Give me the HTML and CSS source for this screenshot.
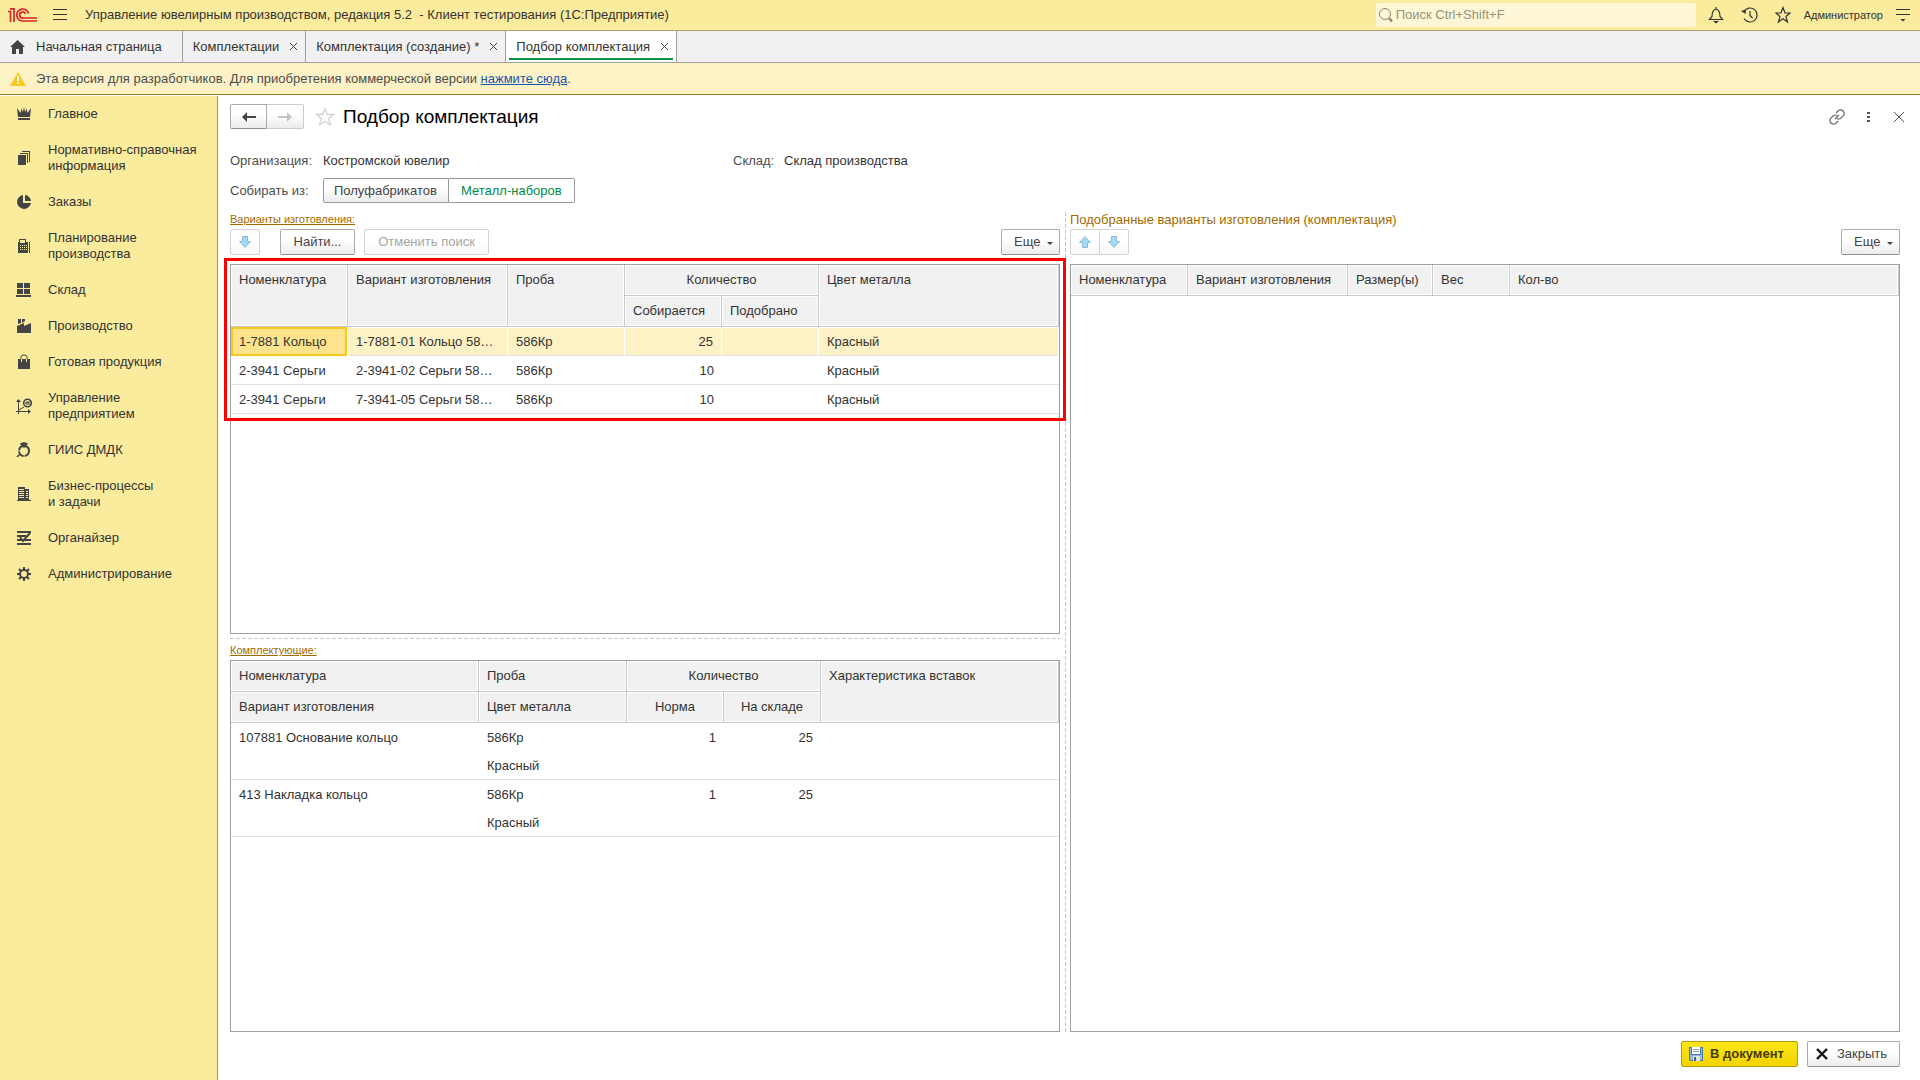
FILE: index.html
```html
<!DOCTYPE html>
<html lang="ru">
<head>
<meta charset="utf-8">
<title>Подбор комплектация</title>
<link rel="stylesheet" href="styles.css">
</head>
<body>
<header class="topbar">
  <svg class="logo" width="30" height="16" viewBox="0 0 30 16" fill="none" stroke="#d9232a" stroke-width="1.700"><path d="M0 4.500H2.500V15M2 1.800H6V15" /><path d="M20.500 6.500A6 6 0 1 0 15 14H29M17.500 7A3 3 0 1 0 15 11H29"/></svg>
  <button class="icon-btn" aria-label="Меню"><svg width="14" height="12" viewBox="0 0 14 12" stroke="#333"><path d="M0 .5H14M0 5.500H14M0 10.500H14"/></svg></button>
  <span class="app-title">Управление ювелирным производством, редакция 5.2 &nbsp;- Клиент тестирования (1С:Предприятие)</span>
  <label class="search">
    <svg width="16" height="16" viewBox="0 0 16 16" fill="none" stroke="#8f896c"><circle cx="7" cy="7" r="5.500"/><path d="M11 11L14 14.500" stroke-width="2.400"/></svg>
    <input type="text" placeholder="Поиск Ctrl+Shift+F" aria-label="Поиск">
  </label>
  <nav class="top-actions">
    <button class="icon-btn" aria-label="Оповещения"><svg width="16" height="18" viewBox="0 0 16 18" fill="none" stroke="#333" stroke-width="1.200"><path d="M1.500 13.500H14.500L12 10.500Q12 4 8 3Q4 4 4 10.500ZM8 1V3"/><path d="M5 15H11L8 17.500Z" fill="#333" stroke="none"/></svg></button>
    <button class="icon-btn" aria-label="История"><svg width="17" height="18" viewBox="0 0 17 18" fill="none" stroke="#333" stroke-width="1.200"><path d="M3 5.500A7 7 0 1 1 3 12.500M9 5V9.500L11.500 12"/><path d="M0 5L5 3.500L4.500 8Z" fill="#333" stroke="none"/></svg></button>
    <button class="icon-btn" aria-label="Избранное"><svg width="16" height="18" viewBox="0 0 16 18" fill="none" stroke="#333" stroke-width="1.200"><path d="M8 1.500L10 7H15L11 10.500L12.500 16L8 12.800L3.500 16L5 10.500L1 7H6Z"/></svg></button>
    <a class="user" href="#">Администратор</a>
    <button class="icon-btn" aria-label="Сервис"><svg width="14" height="14" viewBox="0 0 14 14" stroke="#333"><path d="M0 1.500H14M0 6.500H14"/><path d="M4.500 11H9.500L7 13.500Z" fill="#333" stroke="none"/></svg></button>
  </nav>
</header>

<nav class="tabs">
  <a class="tab tab-home" href="#"><svg width="15" height="14" viewBox="0 0 15 14" fill="#444"><path d="M7.500 0L15 7H13V14H9V9H6V14H2V7H0Z"/></svg>Начальная страница</a>
  <a class="tab" href="#">Комплектации<svg width="9" height="9" viewBox="0 0 9 9" stroke="#444"><path d="M1 1L8 8M8 1L1 8"/></svg></a>
  <a class="tab" href="#">Комплектация (создание) *<svg width="9" height="9" viewBox="0 0 9 9" stroke="#444"><path d="M1 1L8 8M8 1L1 8"/></svg></a>
  <a class="tab active" href="#">Подбор комплектация<svg width="9" height="9" viewBox="0 0 9 9" stroke="#444"><path d="M1 1L8 8M8 1L1 8"/></svg></a>
</nav>

<div class="notice">
  <svg width="16" height="14" viewBox="0 0 16 14"><path d="M8 0L16 14H0Z" fill="#f9c81e"/><path d="M7 4H9V9H7ZM7 10.500H9V12H7Z" fill="#fff"/></svg>
  <span>Эта версия для разработчиков. Для приобретения коммерческой версии <a href="#">нажмите сюда</a>.</span>
</div>

<div class="workspace">
<nav class="sidebar">
  <a href="#"><svg viewBox="0 0 16 16"><path d="M1 2L4.500 7L5.500 2.500L7 6L8 1L9 6L10.500 2.500L11.500 7L15 2L14 11H2ZM2 12H14V14H2Z"/></svg>Главное</a>
  <a href="#"><svg viewBox="0 0 16 16"><path d="M2 5H10V15H2ZM4 3H12V13H11V4H4ZM6 1H14V12H13V2H6Z"/></svg>Нормативно-справочная информация</a>
  <a href="#"><svg viewBox="0 0 16 16"><path d="M7 1V9H15A7 7 0 1 1 7 1ZM9 1A6.500 6.500 0 0 1 15 7H9Z"/></svg>Заказы</a>
  <a href="#"><svg viewBox="0 0 16 16"><path fill-rule="evenodd" d="M3 1H10V4H12V15H2V4H3ZM4 2V5H9V2ZM4 7V8H5V7ZM6 7V8H7V7ZM8 7V8H9V7ZM10 7V8H11V7ZM4 9V10H5V9ZM6 9V10H7V9ZM8 9V10H9V9ZM10 9V10H11V9ZM4 11V12H5V11ZM6 11V12H7V11ZM8 11V12H9V11ZM10 11V12H11V11ZM13 4H14V15H13Z"/></svg>Планирование производства</a>
  <a href="#"><svg viewBox="0 0 16 16"><path d="M1 1H7V6H1ZM8 1H14V6H8ZM1 7H7V12H1ZM8 7H14V12H8ZM0 13H15V15H0Z"/></svg>Склад</a>
  <a href="#"><svg viewBox="0 0 16 16"><path d="M2 1H5V5L2 6ZM6 1H9V3L6 5ZM1 8L8 5V8L15 5V15H1Z"/></svg>Производство</a>
  <a href="#"><svg viewBox="0 0 16 16"><path d="M2 5H14V15H2Z"/><path d="M5 7V3Q5 1 8 1Q11 1 11 3V7" fill="none" stroke="#444"/><path d="M5.500 5V8M10.500 5V8" stroke="#faeb9d"/></svg>Готовая продукция</a>
  <a href="#"><svg viewBox="0 0 16 16"><path d="M2.500 16V3M0 13.500H14M3 12L8 9" fill="none" stroke="#444"/><path d="M0 4L2.500 1L5 4ZM12 11L15 13.500L12 16Z"/><circle cx="11.500" cy="5" r="3.800" fill="none" stroke="#444" stroke-width="1.600"/><path d="M11 3V7M13 3V7M9 5H13" stroke="#444"/></svg>Управление предприятием</a>
  <a href="#"><svg viewBox="0 0 16 16"><circle cx="8" cy="9" r="5" fill="none" stroke="#444" stroke-width="2" stroke-dasharray="7 1"/><path d="M5 2L7 1H9L11 2L8 5ZM4 12L1 15" stroke="#444" stroke-width="1.500"/></svg>ГИИС ДМДК</a>
  <a href="#"><svg viewBox="0 0 16 16"><path fill-rule="evenodd" d="M2 1H9V3H13V14H15V15H1V14H2ZM3 3V4H8V3ZM3 5V6H8V5ZM3 7V8H8V7ZM3 9V10H8V9ZM3 11V12H8V11ZM10 5V6H12V5ZM10 7V8H12V7ZM10 9V10H12V9ZM10 11V12H12V11Z"/></svg>Бизнес-процессы<br>и задачи</a>
  <a href="#"><svg viewBox="0 0 16 16"><path d="M1 1H15V3H1ZM1 5H10V7H1ZM1 9H15V11H1ZM1 13H15V15H1Z"/><path d="M4 7L7 11L14 3" fill="none" stroke="#444" stroke-width="2"/></svg>Органайзер</a>
  <a href="#"><svg viewBox="0 0 16 16"><circle cx="8" cy="8" r="4" fill="none" stroke="#444" stroke-width="2"/><path d="M8 1V4M8 12V15M1 8H4M12 8H15M3 3L5 5M11 11L13 13M13 3L11 5M5 11L3 13" stroke="#444" stroke-width="2"/></svg>Администрирование</a>
</nav>

<main class="form">
  <div class="title-row">
    <div class="group history">
      <button class="btn" aria-label="Назад"><svg width="14" height="10" viewBox="0 0 14 10" fill="#444"><path d="M0 5L5 0V4H14V6H5V10Z"/></svg></button>
      <button class="btn off" aria-label="Вперед"><svg width="14" height="10" viewBox="0 0 14 10" fill="#c4c4c4"><path d="M14 5L9 0V4H0V6H9V10Z"/></svg></button>
    </div>
    <button class="icon-btn fav" aria-label="В избранное"><svg width="20" height="20" viewBox="0 0 20 20" fill="none" stroke="#d4d4d4" stroke-width="1.300"><path d="M10 1.500L12.300 7.500H18.500L13.500 11.500L15.500 18L10 14.200L4.500 18L6.500 11.500L1.500 7.500H7.700Z"/></svg></button>
    <h1>Подбор комплектация</h1>
    <div class="window-actions">
      <button class="icon-btn" aria-label="Ссылка"><svg width="16" height="16" viewBox="0 0 16 16" fill="none" stroke="#666" stroke-width="1.200"><path d="M7 4L9.500 1.500Q12 0 14 2Q16 4 14.500 6.500L11.500 9.500Q9.500 10.500 8 9.500M9 12L6.500 14.500Q4 16 2 14Q0 12 1.500 9.500L4.500 6.500Q6.500 5.500 8 6.500M6 10L10 6"/></svg></button>
      <button class="icon-btn" aria-label="Еще"><svg width="16" height="16" viewBox="0 0 16 16" fill="#555"><path d="M7 3H10V5H7ZM7 7H10V9H7ZM7 11H10V13H7Z"/></svg></button>
      <button class="icon-btn" aria-label="Закрыть окно"><svg width="16" height="16" viewBox="0 0 16 16" fill="none" stroke="#555"><path d="M3 3L13 13M13 3L3 13"/></svg></button>
    </div>
  </div>

  <dl class="info">
    <div><dt>Организация:</dt><dd>Костромской ювелир</dd></div>
    <div><dt>Склад:</dt><dd>Склад производства</dd></div>
  </dl>

  <div class="source">
    <span class="caption">Собирать из:</span>
    <div class="group switch">
      <button class="btn">Полуфабрикатов</button>
      <button class="btn chosen">Металл-наборов</button>
    </div>
  </div>

  <div class="panes">
    <div class="left">
      <section class="pane">
        <a class="pane-link" href="#">Варианты изготовления:</a>
        <div class="toolbar">
          <button class="btn light arrow" aria-label="Добавить"><svg width="12" height="12" viewBox="0 0 12 12" fill="#a5d8f3" stroke="#8fb9d3"><path d="M3.500 .5H8.500V5.500H11.500L6 11.500L.5 5.500H3.500Z"/></svg></button>
          <button class="btn find">Найти...</button>
          <button class="btn light cancel">Отменить поиск</button>
          <button class="btn more">Еще<span class="caret"></span></button>
        </div>
        <div class="grid-box">
          <table>
            <colgroup><col class="w117"><col class="w160"><col class="w117"><col class="w97"><col class="w97"><col></colgroup>
            <thead>
              <tr><th rowspan="2">Номенклатура</th><th rowspan="2">Вариант изготовления</th><th rowspan="2">Проба</th><th colspan="2" class="mid">Количество</th><th rowspan="2">Цвет металла</th></tr>
              <tr><th>Собирается</th><th>Подобрано</th></tr>
            </thead>
            <tbody>
              <tr class="selected"><td class="current">1-7881 Кольцо</td><td>1-7881-01 Кольцо 58…</td><td>586Кр</td><td class="num">25</td><td></td><td>Красный</td></tr>
              <tr><td>2-3941 Серьги</td><td>2-3941-02 Серьги 58…</td><td>586Кр</td><td class="num">10</td><td></td><td>Красный</td></tr>
              <tr><td>2-3941 Серьги</td><td>7-3941-05 Серьги 58…</td><td>586Кр</td><td class="num">10</td><td></td><td>Красный</td></tr>
            </tbody>
          </table>
          <div class="highlight"></div>
        </div>
      </section>
      <section class="pane parts">
        <a class="pane-link" href="#">Комплектующие:</a>
        <div class="grid-box">
          <table>
            <colgroup><col class="w248"><col class="w148"><col class="w97"><col class="w97"><col></colgroup>
            <thead>
              <tr><th>Номенклатура</th><th>Проба</th><th colspan="2" class="mid">Количество</th><th rowspan="2">Характеристика вставок</th></tr>
              <tr><th>Вариант изготовления</th><th>Цвет металла</th><th class="mid">Норма</th><th class="mid">На складе</th></tr>
            </thead>
            <tbody class="double">
              <tr><td>107881 Основание кольцо</td><td>586Кр<br>Красный</td><td class="num">1</td><td class="num">25</td><td></td></tr>
              <tr><td>413 Накладка кольцо</td><td>586Кр<br>Красный</td><td class="num">1</td><td class="num">25</td><td></td></tr>
            </tbody>
          </table>
        </div>
      </section>
    </div>
    <section class="pane right">
      <h2>Подобранные варианты изготовления (комплектация)</h2>
      <div class="toolbar">
        <div class="group">
          <button class="btn light arrow" aria-label="Убрать"><svg width="12" height="12" viewBox="0 0 12 12" fill="#a5d8f3" stroke="#8fb9d3"><path d="M3.500 11.500H8.500V6.500H11.500L6 .5L.5 6.500H3.500Z"/></svg></button>
          <button class="btn light arrow" aria-label="Перенести"><svg width="12" height="12" viewBox="0 0 12 12" fill="#a5d8f3" stroke="#8fb9d3"><path d="M3.500 .5H8.500V5.500H11.500L6 11.500L.5 5.500H3.500Z"/></svg></button>
        </div>
        <button class="btn more">Еще<span class="caret"></span></button>
      </div>
      <div class="grid-box">
        <table>
          <colgroup><col class="w117"><col class="w160"><col class="w85"><col class="w77"><col></colgroup>
          <thead><tr><th>Номенклатура</th><th>Вариант изготовления</th><th>Размер(ы)</th><th>Вес</th><th>Кол-во</th></tr></thead>
        </table>
      </div>
    </section>
  </div>

  <footer class="actions">
    <button class="btn primary"><svg width="14" height="14" viewBox="0 0 14 14"><path d="M0 0H14V14H1L0 13Z" fill="#4a78a8"/><path d="M1 1H2V8H12V1H13V13H1Z" fill="#8fb8dc"/><path d="M3 0H11V7H3Z" fill="#fff"/><path d="M4 2H10V3H4ZM4 4H10V5H4Z" fill="#8a9aab"/><path d="M4 9H11V14H4Z" fill="#dfe3e8"/><path d="M5 10H7V14H5Z" fill="#3d5e85"/></svg>В документ</button>
    <button class="btn"><svg width="12" height="12" viewBox="0 0 12 12" stroke="#111" stroke-width="2.400"><path d="M1 1L11 11M11 1L1 11"/></svg>Закрыть</button>
  </footer>
</main>
</div>
</body>
</html>
```
FILE: styles.css
```css
* { box-sizing: border-box; }

body {
  margin: 0;
  min-height: 100vh;
  display: flex;
  flex-direction: column;
  font: 13px/16px "Liberation Sans", Arial, sans-serif;
  color: #333;
  background: #fff;
}

button, input { font: inherit; color: inherit; }
a { color: inherit; text-decoration: none; }
svg { flex: none; display: block; }

.icon-btn {
  display: flex;
  align-items: center;
  justify-content: center;
  padding: 0;
  border: 0;
  background: none;
}

/* Top bar */
.topbar {
  display: flex;
  align-items: center;
  height: 31px;
  padding: 0 10px 0 8px;
  background: #faeb9d;
  border-bottom: 1px solid #a8a06e;
}
.logo { margin-right: 15px; }
.app-title { margin-left: 18px; flex: 1; }
.search {
  display: flex;
  align-items: center;
  width: 320px;
  height: 24px;
  padding-left: 2px;
  gap: 2px;
  background: #fdf7d8;
  border-radius: 2px;
}
.search input {
  flex: 1;
  padding: 0;
  border: 0;
  outline: 0;
  background: none;
}
.search input::placeholder { color: #99937a; opacity: 1; }
.top-actions {
  display: flex;
  align-items: center;
  gap: 17px;
  margin-left: 12px;
}
.user { margin: 0 -4px; font-size: 11px; }

/* Open windows */
.tabs {
  display: flex;
  height: 32px;
  background: #f1f1f1;
  border-bottom: 1px solid #a0a0a0;
}
.tab {
  display: flex;
  align-items: center;
  gap: 10px;
  padding: 0 7px 0 10px;
  border-right: 1px solid #a0a0a0;
}
.tab-home { gap: 11px; padding-right: 20px; }
.tab.active {
  background: linear-gradient(#009646, #009646) 50% 27px / calc(100% - 6px) 2px no-repeat #fff;
}

.notice {
  display: flex;
  align-items: center;
  gap: 10px;
  height: 32px;
  padding-left: 10px;
  color: #4d4d4d;
  background: #fdf2c5;
  border-bottom: 1px solid #947a1c;
}
.notice a { color: #1c55ae; text-decoration: underline; }

/* Sections */
.workspace { flex: 1; display: flex; padding-top: 1px; }
.sidebar {
  width: 218px;
  background: #faeb9d;
  border-right: 1px solid #9b9257;
}
.sidebar a {
  display: grid;
  grid-template-columns: 16px 1fr;
  align-items: center;
  column-gap: 16px;
  padding: 10px 12px 10px 16px;
}
.sidebar svg { width: 16px; height: 16px; fill: #444; grid-row: 1 / span 2; }
.sidebar a { display: flex; white-space: normal; }

/* Form */
.form {
  flex: 1;
  min-width: 0;
  display: flex;
  flex-direction: column;
  padding: 8px 20px 13px 12px;
}
.title-row { display: flex; align-items: center; height: 25px; }
.history .btn { width: 37px; height: 25px; padding: 0; }
.fav { margin: 0 8px 0 11px; }
h1 { margin: 0; font: 19px/24px "Liberation Sans", Arial, sans-serif; color: #000; }
.window-actions { display: flex; gap: 15px; margin: 0 -7px 0 auto; }

.info { display: flex; margin: 24px 0 0; }
.info div { display: flex; }
.info div:first-child { width: 503px; }
.info dt { color: #4d4d4d; }
.info div:first-child dt { width: 93px; }
.info div + div dt { width: 51px; }
.info dd { margin: 0; }

.source { display: flex; align-items: center; margin-top: 9px; }
.caption { width: 93px; color: #4d4d4d; }

.btn {
  display: flex;
  align-items: center;
  justify-content: center;
  height: 26px;
  padding: 0 12px;
  color: #444;
  background: linear-gradient(#fff 40%, #ececec);
  border: 1px solid #ababab;
  border-bottom-color: #8f8f8f;
  border-radius: 2px;
  white-space: nowrap;
}
.btn.off { border-color: #ccc; }
.btn.light { color: #a6a6a6; background: linear-gradient(#fff 40%, #f7f7f7); border-color: #d2d2d2; }
.group { display: flex; }
.group .btn + .btn { border-left-width: 0; border-radius: 0 2px 2px 0; }
.group .btn:first-child { border-radius: 2px 0 0 2px; }
.switch .btn { height: 25px; padding: 0 11px 0 10px; border-color: #999; }
.switch .btn.chosen { padding: 0 12px; background: #fff; color: #008c46; }

.panes {
  flex: 1;
  display: grid;
  grid-template-columns: 1fr 1fr;
  gap: 10px;
  margin-top: 9px;
  background: repeating-linear-gradient(#c4c4c4 0 4px, transparent 4px 6px) 50% 0 / 1px 100% no-repeat;
}
.left { display: flex; flex-direction: column; gap: 4px; min-width: 0; }
.pane { flex: 1; min-width: 0; display: flex; flex-direction: column; }
.left .pane { flex: 1 0 auto; }
.left .pane:first-child { flex-basis: 422px; }
.left .parts {
  flex-basis: 394px;
  padding-top: 5px;
  background: repeating-linear-gradient(90deg, #c4c4c4 0 4px, transparent 4px 6px) 0 0 / 100% 1px no-repeat;
}
.pane-link {
  align-self: flex-start;
  font-size: 11px;
  line-height: 14px;
  color: #a36a00;
  text-decoration: underline;
}
.parts .pane-link { margin-bottom: 3px; }
h2 { margin: 0; height: 14px; font: 13px/16px "Liberation Sans", Arial, sans-serif; color: #a36a00; }
.toolbar { display: flex; margin: 3px 0 9px; }
.arrow { width: 30px; padding: 0; }
.group .arrow + .arrow { width: 29px; }
.group .arrow:first-child { width: 30px; }
.find { width: 75px; margin: 0 9px 0 20px; }
.cancel { width: 125px; }
.more { width: 59px; margin-left: auto; padding: 0 6px 0 12px; justify-content: space-between; }
.caret { border: 3px solid transparent; border-top-color: #444; border-bottom: 0; margin-top: 3px; }

.grid-box { position: relative; flex: 1; border: 1px solid #a0a0a0; }
table { width: 100%; table-layout: fixed; border-collapse: separate; border-spacing: 0; }
.w77 { width: 77px; }
.w85 { width: 85px; }
.w97 { width: 97px; }
.w117 { width: 117px; }
.w148 { width: 148px; }
.w160 { width: 160px; }
.w248 { width: 248px; }
th, td { padding: 0 8px; text-align: left; vertical-align: top; white-space: nowrap; overflow: hidden; }
th {
  height: 31px;
  padding-top: 7px;
  font-weight: normal;
  background: #f1f1f1;
  border-right: 1px solid #c8c8c8;
  border-bottom: 1px solid #c8c8c8;
  box-shadow: inset 0 0 0 1px #fff;
}
.mid { text-align: center; }
td {
  height: 29px;
  padding-top: 1px;
  line-height: 28px;
  box-shadow: inset 0 -1px #e2e2e2;
}
.double td { height: 57px; }
.num { text-align: right; }
.selected td {
  background: #fdf2c5;
  border-right: 1px solid #fff;
  box-shadow: inset 0 -1px #e2e2e2, inset 0 1px #fff;
}
.selected .current { background: #fde38c; box-shadow: inset 0 0 0 2px #f9c81e; }
.highlight {
  position: absolute;
  inset: -7px -7px auto;
  height: 163px;
  border: 3px solid #f00;
}

.actions { display: flex; justify-content: flex-end; gap: 9px; margin-top: 9px; }
.actions .btn { gap: 9px; padding: 0 12px 0 8px; }
.actions .primary {
  gap: 7px;
  padding-left: 7px;
  padding-right: 13px;
  font-weight: bold;
  color: #443c00;
  background: linear-gradient(#ffe61a, #f3d300);
  border-color: #b09a10;
}
```
